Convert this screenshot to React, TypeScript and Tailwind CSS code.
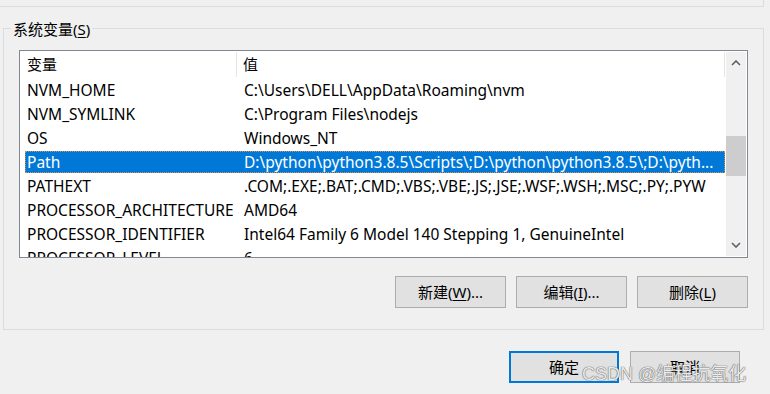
import React from 'react';

const FONT = '"Noto Sans", "Noto Sans CJK SC", sans-serif';

interface Row {
  name: string;
  value: string;
  selected?: boolean;
}

const rows: Row[] = [
  { name: 'NVM_HOME', value: 'C:\\Users\\DELL\\AppData\\Roaming\\nvm' },
  { name: 'NVM_SYMLINK', value: 'C:\\Program Files\\nodejs' },
  { name: 'OS', value: 'Windows_NT' },
  {
    name: 'Path',
    value: 'D:\\python\\python3.8.5\\Scripts\\;D:\\python\\python3.8.5\\;D:\\pyth...',
    selected: true,
  },
  { name: 'PATHEXT', value: '.COM;.EXE;.BAT;.CMD;.VBS;.VBE;.JS;.JSE;.WSF;.WSH;.MSC;.PY;.PYW' },
  { name: 'PROCESSOR_ARCHITECTURE', value: 'AMD64' },
  { name: 'PROCESSOR_IDENTIFIER', value: 'Intel64 Family 6 Model 140 Stepping 1, GenuineIntel' },
  { name: 'PROCESSOR_LEVEL', value: '6' },
];

// Win10 style push button
const Button: React.FC<{ children: React.ReactNode; primary?: boolean; className?: string }> = ({
  children,
  primary,
  className = '',
}) => (
  <div
    className={`h-[32px] flex items-center justify-center bg-[#e1e1e1] text-[15px] text-black ${
      primary ? 'border-2 border-[#0078d7]' : 'border border-[#adadad]'
    } ${className}`}
  >
    {children}
  </div>
);

const Chevron: React.FC<{ down?: boolean }> = ({ down }) => (
  <svg width="10" height="6" viewBox="0 0 10 6" className="block">
    <path
      d={down ? 'M1 1 L5 5 L9 1' : 'M1 5 L5 1 L9 5'}
      fill="none"
      stroke="#606060"
      strokeWidth="1.6"
    />
  </svg>
);

const App: React.FC = () => {
  return (
    <div
      className="relative w-[770px] h-[394px] bg-[#f0f0f0] overflow-hidden"
      style={{ fontFamily: FONT }}
    >
      {/* bottom edge of the user variables group above */}
      <div className="h-[7px] w-[764px] border-r border-b border-[#dcdcdc]" />

      {/* system variables group */}
      <div className="relative mt-[21px] ml-[3px] w-[761px] h-[302px] border border-[#dcdcdc]">
        <div className="absolute left-[7px] -top-[10px] px-[2px] bg-[#f0f0f0] text-[15px] leading-[20px] text-black">
          系统变量(<span className="underline underline-offset-2">S</span>)
        </div>

        {/* list view */}
        <div className="mt-[21px] ml-[15px] w-[729px] h-[208px] border border-[#828790] bg-white flex">
          <div className="flex-1 flex flex-col overflow-hidden">
            {/* header */}
            <div className="h-[27px] shrink-0 flex text-[15px] text-black">
              <div className="w-[217px] pl-[7px] flex items-center border-r border-[#e5e5e5] my-[1px]">
                变量
              </div>
              <div className="flex-1 pl-[6px] flex items-center border-r border-[#e5e5e5] my-[1px]">
                值
              </div>
              <div className="w-[1px]" />
            </div>
            {/* rows */}
            <div className="pl-[5px] pr-[1px]">
              {rows.map((r) => (
                <div key={r.name} className="h-[24px] py-[1px]">
                  <div
                    className={`h-[22px] pt-[2px] flex items-center text-[15.5px] whitespace-nowrap ${
                      r.selected
                        ? 'bg-[#0078d7] text-white border border-dotted border-[#d9904a]'
                        : 'text-black border border-transparent'
                    }`}
                  >
                    <div className="w-[212px] pl-[1px] shrink-0 overflow-hidden">{r.name}</div>
                    <div className="flex-1 pl-[6px] overflow-hidden">{r.value}</div>
                  </div>
                </div>
              ))}
            </div>
          </div>

          {/* vertical scrollbar */}
          <div className="w-[20px] shrink-0 bg-[#f0f0f0] flex flex-col mt-[1px] mb-[1px] mr-[1px]">
            <div className="h-[22px] flex items-center justify-center">
              <Chevron />
            </div>
            <div className="h-[62px]" />
            <div className="h-[40px] bg-[#cdcdcd]" />
            <div className="flex-1" />
            <div className="h-[22px] flex items-center justify-center">
              <Chevron down />
            </div>
          </div>
        </div>

        {/* action buttons */}
        <div className="mt-[18px] w-[744px] flex justify-end gap-[10px]">
          <Button className="w-[111px]">
            新建(<span className="underline underline-offset-2">W</span>)...
          </Button>
          <Button className="w-[111px]">
            编辑(<span className="underline underline-offset-2">I</span>)...
          </Button>
          <Button className="w-[111px]">
            删除(<span className="underline underline-offset-2">L</span>)
          </Button>
        </div>
      </div>

      {/* dialog buttons */}
      <div className="mt-[21px] w-[740px] flex justify-end gap-[11px]">
        <Button primary className="w-[110px]">
          确定
        </Button>
        <Button className="w-[110px]">取消</Button>
      </div>

      {/* watermark */}
      <div
        className="absolute left-[582px] top-[362px] text-[18px] leading-[24px] text-[rgba(250,250,250,0.92)] [text-shadow:0_0_1px_#555,0_0_1px_#555] whitespace-nowrap"
        style={{ fontFamily: '"Liberation Sans", "Noto Sans CJK SC", sans-serif' }}
      >
        CSDN @编程抗氧化
      </div>
    </div>
  );
};

export default App;
